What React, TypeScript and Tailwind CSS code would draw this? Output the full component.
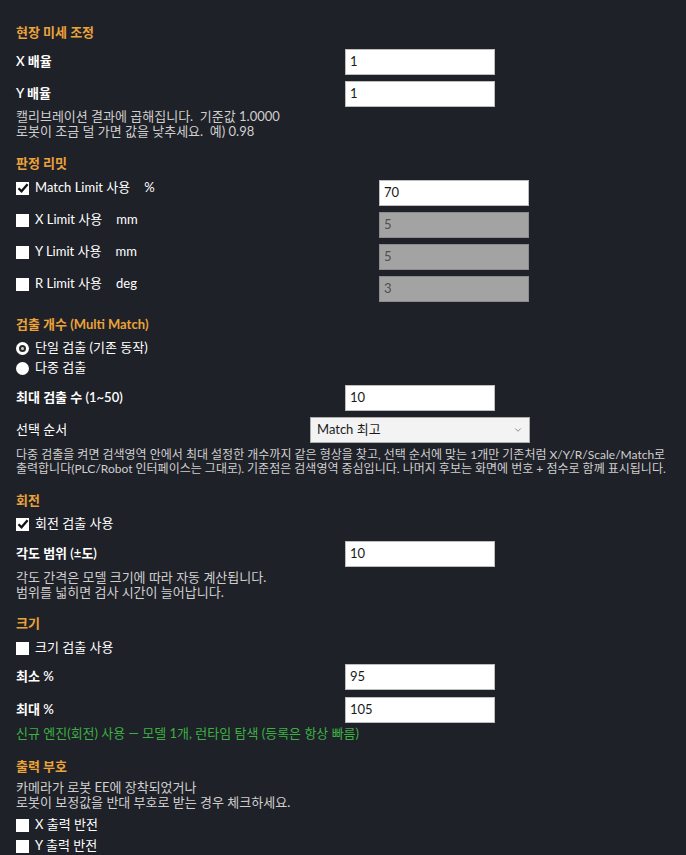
import { ChevronDown } from 'lucide-react';

const font = { fontFamily: 'Lato, "Noto Sans CJK KR", sans-serif' };

function Heading({ children, className = '' }: { children: React.ReactNode; className?: string }) {
  return <div className={`h-4 leading-4 text-[13px] font-bold text-[#eba33a] ${className}`}>{children}</div>;
}

function TextBox({ value, disabled }: { value: string; disabled?: boolean }) {
  return (
    <div
      className={`w-[150px] h-[26px] flex items-center px-[4px] text-[13px] border ${
        disabled ? 'bg-[#a3a3a3] border-[#8c8c8c] text-[#505050]' : 'bg-white border-[#bdbdbd] text-[#1a1a1a]'
      }`}
    >
      {value}
    </div>
  );
}

function Field({ label, value, className = '' }: { label: string; value: string; className?: string }) {
  return (
    <div className={`flex items-center h-[26px] ${className}`}>
      <div className="w-[329px] shrink-0 text-[13px] font-semibold text-white">{label}</div>
      <TextBox value={value} />
    </div>
  );
}

function Box({ checked }: { checked?: boolean }) {
  return (
    <span className="w-[13px] h-[13px] bg-white shrink-0 flex items-center justify-center">
      {checked && (
        <svg viewBox="0 0 12 12" className="w-[12px] h-[12px]">
          <path d="M1.5 6.2 L4.5 9.2 L10.6 2.3" fill="none" stroke="#111" strokeWidth="2.3" />
        </svg>
      )}
    </span>
  );
}

function CheckRow({ label, unit, checked, value, disabled, className = '' }: { label: string; unit?: string; checked?: boolean; value?: string; disabled?: boolean; className?: string }) {
  return (
    <div className={`flex items-start ${className}`}>
      <div className="w-[363px] shrink-0 h-4 flex items-center gap-[6px] text-[13px] text-white">
        <Box checked={checked} />
        <span>{label}</span>
        {unit && <span className="ml-[8px]">{unit}</span>}
      </div>
      {value !== undefined && <TextBox value={value} disabled={disabled} />}
    </div>
  );
}

function Radio({ label, checked }: { label: string; checked?: boolean }) {
  return (
    <div className="h-5 flex items-center gap-[6px] text-[13px] text-white">
      <span className="w-[13px] h-[13px] rounded-full bg-white shrink-0 flex items-center justify-center">
        {checked && <span className="w-[7px] h-[7px] rounded-full border-2 border-[#2a2a2a] bg-[#d0d0d0]" />}
      </span>
      <span>{label}</span>
    </div>
  );
}

function Help({ lines, className = '' }: { lines: string[]; className?: string }) {
  return (
    <div className={`text-[13px] text-[#cfcfcf] ${className}`}>
      {lines.map((l) => (
        <div key={l} className="h-[15px] leading-[15px] whitespace-pre">
          {l}
        </div>
      ))}
    </div>
  );
}

export default function App() {
  return (
    <div className="min-h-screen bg-[#1f2128]" style={font}>
      <div className="px-4 pt-[24px]">
        <Heading>현장 미세 조정</Heading>
        <Field label="X 배율" value="1" className="mt-[9px]" />
        <Field label="Y 배율" value="1" className="mt-[6px]" />
        <Help className="mt-[2px]" lines={['캘리브레이션 결과에 곱해집니다.  기준값 1.0000', '로봇이 조금 덜 가면 값을 낮추세요.  예) 0.98']} />

        <Heading className="mt-[16px]">판정 리밋</Heading>
        <CheckRow label="Match Limit 사용" unit="%" checked value="70" className="mt-[9px]" />
        <CheckRow label="X Limit 사용" unit="mm" value="5" disabled className="mt-[6px]" />
        <CheckRow label="Y Limit 사용" unit="mm" value="5" disabled className="mt-[6px]" />
        <CheckRow label="R Limit 사용" unit="deg" value="3" disabled className="mt-[6px]" />

        <Heading className="mt-[14px]">검출 개수 (Multi Match)</Heading>
        <div className="mt-[6px]">
          <Radio label="단일 검출 (기존 동작)" checked />
          <Radio label="다중 검출" />
        </div>
        <Field label="최대 검출 수 (1~50)" value="10" className="mt-[7px]" />
        <div className="flex items-center h-[26px] mt-[6px]">
          <div className="w-[294px] shrink-0 text-[13px] text-white">선택 순서</div>
          <div className="w-[220px] h-[26px] flex items-center justify-between pl-[6px] pr-[6px] text-[13px] text-[#1a1a1a] bg-[#f3f3f3] border border-[#adadad]">
            <span>Match 최고</span>
            <ChevronDown className="w-[10px] h-[10px] text-[#777]" strokeWidth={2} />
          </div>
        </div>
        <div className="mt-[5px] text-[12px] text-[#cfcfcf] whitespace-nowrap">
          <div className="h-[14px] leading-[14px]">
            다중 검출을 켜면 검색영역 안에서 최대 설정한 개수까지 같은 형상을 찾고, 선택 순서에 맞는 1개만 기존처럼 X/Y/R/Scale/Match로
          </div>
          <div className="h-[14px] leading-[14px]">
            출력합니다(PLC/Robot 인터페이스는 그대로). 기준점은 검색영역 중심입니다. 나머지 후보는 화면에 번호 + 점수로 함께 표시됩니다.
          </div>
        </div>

        <Heading className="mt-[16px]">회전</Heading>
        <CheckRow label="회전 검출 사용" checked className="mt-[8px]" />
        <Field label="각도 범위 (±도)" value="10" className="mt-[9px]" />
        <Help className="mt-[3px]" lines={['각도 간격은 모델 크기에 따라 자동 계산됩니다.', '범위를 넓히면 검사 시간이 늘어납니다.']} />

        <Heading className="mt-[15px]">크기</Heading>
        <CheckRow label="크기 검출 사용" className="mt-[9px]" />
        <Field label="최소 %" value="95" className="mt-[8px]" />
        <Field label="최대 %" value="105" className="mt-[7px]" />
        <div className="mt-[2px] h-4 leading-4 text-[13px] text-[#3cb043]">
          신규 엔진(회전) 사용 — 모델 1개, 런타임 탐색 (등록은 항상 빠름)
        </div>

        <Heading className="mt-[17px]">출력 부호</Heading>
        <Help className="mt-[6px]" lines={['카메라가 로봇 EE에 장착되었거나', '로봇이 보정값을 반대 부호로 받는 경우 체크하세요.']} />
        <div className="mt-[5px] flex flex-col gap-[1px]">
          <div className="h-5 flex items-center gap-[6px] text-[13px] text-white">
            <Box />
            <span>X 출력 반전</span>
          </div>
          <div className="h-5 flex items-center gap-[6px] text-[13px] text-white">
            <Box />
            <span>Y 출력 반전</span>
          </div>
        </div>
      </div>
    </div>
  );
}
